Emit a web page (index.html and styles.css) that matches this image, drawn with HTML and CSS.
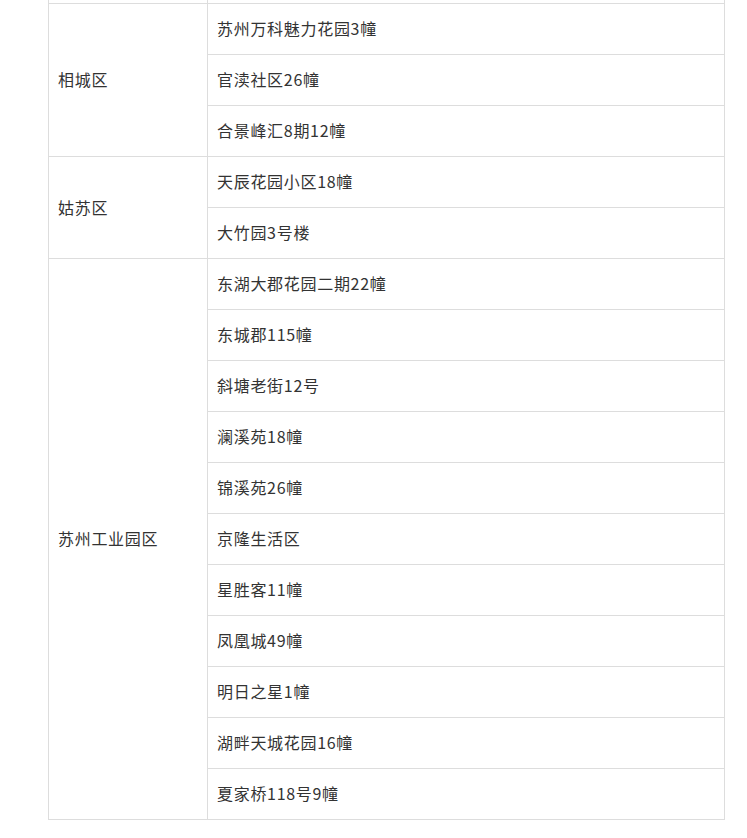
FILE: index.html
```html
<!DOCTYPE html>
<html lang="zh-CN">
<head>
<meta charset="utf-8">
<title>table</title>
<link rel="stylesheet" href="styles.css">
</head>
<body>
<div class="wrap">
<table class="list">
<tbody>
<tr class="prev"><td class="area"></td><td class="item"></td></tr>
<tr><td class="area" rowspan="3">相城区</td><td class="item">苏州万科魅力花园3幢</td></tr>
<tr><td class="item">官渎社区26幢</td></tr>
<tr><td class="item">合景峰汇8期12幢</td></tr>
<tr><td class="area" rowspan="2">姑苏区</td><td class="item">天辰花园小区18幢</td></tr>
<tr><td class="item">大竹园3号楼</td></tr>
<tr><td class="area" rowspan="11">苏州工业园区</td><td class="item">东湖大郡花园二期22幢</td></tr>
<tr><td class="item">东城郡115幢</td></tr>
<tr><td class="item">斜塘老街12号</td></tr>
<tr><td class="item">澜溪苑18幢</td></tr>
<tr><td class="item">锦溪苑26幢</td></tr>
<tr><td class="item">京隆生活区</td></tr>
<tr><td class="item">星胜客11幢</td></tr>
<tr><td class="item">凤凰城49幢</td></tr>
<tr><td class="item">明日之星1幢</td></tr>
<tr><td class="item">湖畔天城花园16幢</td></tr>
<tr><td class="item">夏家桥118号9幢</td></tr>
</tbody>
</table>
</div>
</body>
</html>
```

FILE: styles.css
```css
html, body {
  margin: 0;
  padding: 0;
  background: #ffffff;
}
body {
  font-family: "Noto Sans CJK SC", "Noto Sans", sans-serif;
  color: #333333;
  font-size: 16px;
}
.wrap {
  padding-left: 48px;
  overflow: hidden;
}
.list {
  border-collapse: collapse;
  width: 677px;
  margin-top: -48px;
  table-layout: fixed;
}
.list tr {
  height: 51px;
}
.list td {
  border: 1px solid #dddddd;
  padding: 0 9px 2px 9px;
  vertical-align: middle;
  line-height: 20px;
  white-space: nowrap;
  letter-spacing: 0.7px;
}
.area {
  width: 140px;
}
.item {
  width: auto;
}
```
